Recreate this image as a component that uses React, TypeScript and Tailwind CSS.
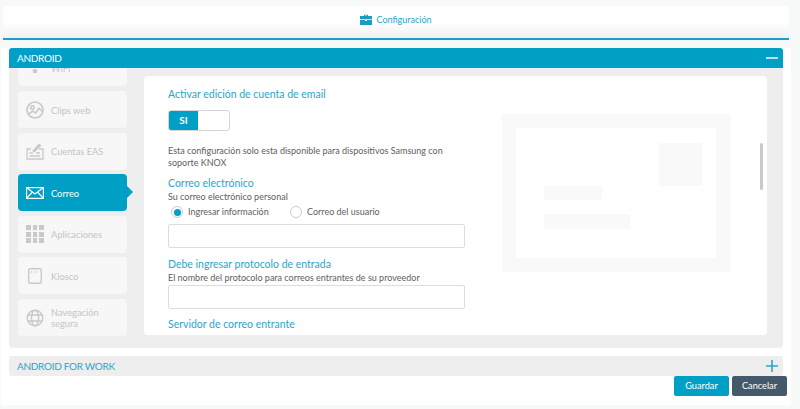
import React from 'react';

const font = 'font-["Lato",sans-serif]';

const ClipIcon = () => (
  <svg width="18" height="18" viewBox="0 0 18 18" fill="none" stroke="#c9c9c9" strokeWidth="1.6">
    <circle cx="9" cy="9" r="8" />
    <circle cx="6.5" cy="6.5" r="1.7" />
    <path d="M2 13.5 L7 10 L9.5 12 L13 7.5 L16.5 10.5" />
  </svg>
);

const EasIcon = () => (
  <svg width="18" height="18" viewBox="0 0 18 18" fill="none" stroke="#c9c9c9" strokeWidth="1.3">
    <path d="M5 7 H1 V17 H17 V7 H13" />
    <path d="M3.5 11 H7 M3.5 14 H14 M10 11 H14" />
    <path d="M6 9 L13 1.5 L15.5 3.5 L8.5 10.5 Z" fill="#c9c9c9" stroke="none" />
  </svg>
);

const MailIcon = () => (
  <svg width="18" height="12" viewBox="0 0 18 12" fill="none" stroke="#ffffff" strokeWidth="1.2">
    <rect x="0.6" y="0.6" width="16.8" height="10.8" />
    <path d="M0.6 0.6 L9 7 L17.4 0.6 M0.6 11.4 L6.5 5 M17.4 11.4 L11.5 5" />
  </svg>
);

const GridIcon = () => (
  <div className="grid grid-cols-3 gap-x-[2px] gap-y-[1.5px] w-[18px]">
    {Array.from({ length: 9 }).map((_, i) => (
      <div key={i} className="h-[5px] bg-[#c9c9c9]" />
    ))}
  </div>
);

const KioskIcon = () => (
  <svg width="18" height="18" viewBox="0 0 18 18" fill="none" stroke="#c9c9c9" strokeWidth="1.4">
    <rect x="2.7" y="1.7" width="12.6" height="14.6" rx="1.5" />
    <path d="M5 5 H6 M7.5 5 H8.5 M10 5 H11" />
  </svg>
);

const GlobeIcon = () => (
  <svg width="18" height="18" viewBox="0 0 18 18" fill="none" stroke="#c9c9c9" strokeWidth="1.4">
    <circle cx="9" cy="9" r="7.8" />
    <ellipse cx="9" cy="9" rx="3.6" ry="7.8" />
    <path d="M1.8 6 H16.2 M1.8 12 H16.2" />
  </svg>
);

const WifiIcon = () => (
  <svg width="18" height="18" viewBox="0 0 18 18" fill="none" stroke="#c9c9c9" strokeWidth="1.4">
    <path d="M3 5 Q9 0 15 5 M5 8 Q9 5 13 8" />
    <circle cx="9" cy="12" r="1.6" fill="#c9c9c9" />
  </svg>
);

const items = [
  { label: 'WiFi', icon: <WifiIcon /> },
  { label: 'Clips web', icon: <ClipIcon /> },
  { label: 'Cuentas EAS', icon: <EasIcon /> },
  { label: 'Correo', icon: <MailIcon />, active: true },
  { label: 'Aplicaciones', icon: <GridIcon /> },
  { label: 'Kiosco', icon: <KioskIcon /> },
  { label: 'Navegación segura', icon: <GlobeIcon /> },
];

const Heading = ({ children, mt }: { children: React.ReactNode; mt: string }) => (
  <div className={`${mt} text-[10.5px] leading-[16px] text-[#2ba5c9]`}>{children}</div>
);

const Sub = ({ children }: { children: React.ReactNode }) => (
  <div className="text-[9px] leading-[12px] text-[#606060]">{children}</div>
);

export default function App() {
  return (
    <div className={`${font} w-[800px] h-[409px] overflow-hidden bg-[#f7f9f8] flex flex-col`}>
      <div className="ml-[3px] mr-[11px] mt-[6px] h-[34px] shrink-0 bg-gradient-to-b from-white from-50% to-[#f0f1f1] border-b-2 border-[#1c9fcf] flex items-center justify-center gap-[4px] pb-[5px]">
        <svg width="12" height="11" viewBox="0 0 12 11" fill="#1c9bc4">
          <path d="M4 2 V0.8 H8 V2 H12 V5.2 H0 V2 Z M5 1.6 V2 H7 V1.6 Z" />
          <path d="M0 6 H5 V7 H7 V6 H12 V11 H0 Z" />
        </svg>
        <span className="text-[9px] text-[#2ba5c9]">Configuración</span>
      </div>

      <div className="ml-[1px] mr-[9px] mt-[8px] h-[357px] bg-white rounded-[3px] px-[8px] flex flex-col">
        <div className="h-[20px] shrink-0 bg-[#00a0c6] rounded-t-[3px] flex items-center justify-between pl-[8px] pr-[5px]">
          <span className="text-[10px] tracking-[-0.3px] text-white">ANDROID</span>
          <div className="w-[12px] h-[2px] bg-[#b8e2ee]" />
        </div>

        <div className="h-[280px] shrink-0 bg-[#eeeeee] rounded-b-[4px] pl-[9px] pr-[16px] flex gap-[11px]">
          <div className="w-[115px] h-[268px] overflow-hidden flex flex-col justify-end gap-[4.6px] shrink-0">
            {items.map((it) => (
              <div
                key={it.label}
                className={`relative w-[109px] h-[37px] shrink-0 rounded-[4px] flex items-center pl-[8px] gap-[7px] ${it.active ? 'bg-[#00a0c6] text-white' : 'bg-[#f7f7f7] text-[#c4c4c4]'}`}
              >
                <div className="w-[18px] flex justify-center shrink-0">{it.icon}</div>
                <span className="pt-[1px] text-[9.3px] leading-[11px] w-[60px]">{it.label}</span>
                {it.active && (
                  <div className="absolute right-[-6px] top-[12px] w-0 h-0 border-y-[6px] border-y-transparent border-l-[6px] border-l-[#00a0c6]" />
                )}
              </div>
            ))}
          </div>

          <div className="relative mt-[8px] h-[259px] w-[623px] bg-white rounded-[4px] overflow-hidden pl-[24px] flex">
            <div className="w-[297px] shrink-0 pt-[10px]">
              <div className="text-[10.5px] leading-[16px] text-[#2ba5c9]">Activar edición de cuenta de email</div>
              <div className="mt-[8px] w-[62px] h-[21px] rounded-[3px] border border-[#d5d5d5] flex overflow-hidden">
                <div className="w-[29px] bg-[#00a0c6] text-white text-[10px] font-bold flex items-center justify-center">SI</div>
              </div>
              <div className="mt-[14px] text-[9px] leading-[12px] text-[#606060] w-[285px]">
                Esta configuración solo esta disponible para dispositivos Samsung con soporte KNOX
              </div>
              <Heading mt="mt-[6px]">Correo electrónico</Heading>
              <Sub>Su correo electrónico personal</Sub>
              <div className="mt-[3px] ml-[3px] flex items-center text-[9px] leading-[12px] text-[#606060]">
                <div className="w-[12px] h-[12px] rounded-full border border-[#ccc] flex items-center justify-center">
                  <div className="w-[7px] h-[7px] rounded-full bg-[#00a0c6]" />
                </div>
                <span className="ml-[5px] w-[102px]">Ingresar información</span>
                <div className="w-[12px] h-[12px] rounded-full border border-[#ccc]" />
                <span className="ml-[5px]">Correo del usuario</span>
              </div>
              <div className="mt-[6px] h-[24px] rounded-[2px] border border-[#dddddd]" />
              <Heading mt="mt-[8px]">Debe ingresar protocolo de entrada</Heading>
              <Sub>El nombre del protocolo para correos entrantes de su proveedor</Sub>
              <div className="mt-[1px] h-[24px] rounded-[2px] border border-[#dddddd]" />
              <Heading mt="mt-[7px]">Servidor de correo entrante</Heading>
            </div>

            <div className="ml-[37px] mt-[38px] w-[229px] h-[158px] shrink-0 bg-[#f9f9f9] p-[14px]">
              <div className="w-[200px] h-[130px] bg-white pl-[28px] pt-[15px] flex flex-col">
                <div className="ml-[115px] w-[43px] h-[43px] bg-[#f9f9f9]" />
                <div className="w-[58px] h-[14px] bg-[#f9f9f9]" />
                <div className="mt-[14px] w-[86px] h-[15px] bg-[#f9f9f9]" />
              </div>
            </div>

            <div className="absolute left-[616px] top-[67px] w-[3px] h-[47px] rounded-full bg-[#c9c9c9]" />
          </div>
        </div>

        <div className="mt-[8px] h-[20px] shrink-0 bg-[#eeeeee] rounded-[3px] flex items-center justify-between pl-[8px] pr-[5px]">
          <span className="text-[10px] tracking-[-0.3px] text-[#2ba5c9]">ANDROID FOR WORK</span>
          <svg width="12" height="12" viewBox="0 0 12 12" stroke="#2ba5c9" strokeWidth="1.6">
            <path d="M6 0 V12 M0 6 H12" />
          </svg>
        </div>

        <div className="flex justify-end gap-[3px] -mr-[4px]">
          <button className="w-[55px] h-[20px] rounded-[2px] bg-[#00a0c6] text-white text-[9.2px]">Guardar</button>
          <button className="w-[55px] h-[20px] rounded-[2px] bg-[#44596a] text-white text-[9.2px]">Cancelar</button>
        </div>
      </div>
    </div>
  );
}
